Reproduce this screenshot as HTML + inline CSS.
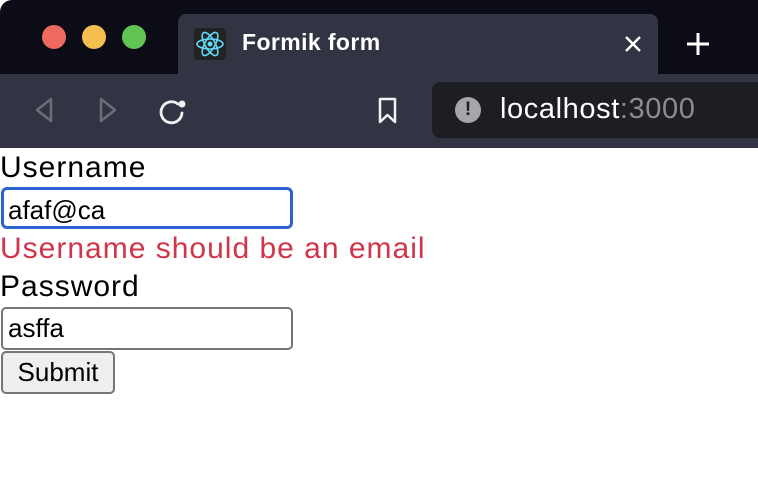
<!DOCTYPE html>
<html><head><style>
*{margin:0;padding:0;box-sizing:border-box}
body{width:758px;height:500px;overflow:hidden;background:#fff;font-family:"Liberation Sans",Arial,sans-serif;position:relative}
.a{position:absolute;white-space:nowrap}
.l{font-size:30px;letter-spacing:1px;line-height:34px}
</style></head><body>
<div class="a" style="left:0;top:0;width:758px;height:74px;background:#0c0c17;border-top-left-radius:12px"></div>
<div class="a" style="left:42px;top:25px;width:24px;height:24px;border-radius:50%;background:#ee6a5e"></div>
<div class="a" style="left:82px;top:25px;width:24px;height:24px;border-radius:50%;background:#f5bf4f"></div>
<div class="a" style="left:122px;top:25px;width:24px;height:24px;border-radius:50%;background:#61c554"></div>
<div class="a" style="left:178px;top:14px;width:480px;height:62px;background:#323443;border-radius:8px 8px 0 0"></div>
<div class="a" style="left:194px;top:28px;width:32px;height:32px;background:#222;border-radius:4px">
<svg width="32" height="32" viewBox="0 0 32 32"><g fill="none" stroke="#61dafb" stroke-width="1.6"><ellipse cx="16" cy="16" rx="13" ry="5"/><ellipse cx="16" cy="16" rx="13" ry="5" transform="rotate(60 16 16)"/><ellipse cx="16" cy="16" rx="13" ry="5" transform="rotate(120 16 16)"/></g><circle cx="16" cy="16" r="2.5" fill="#61dafb"/></svg></div>
<div class="a" style="left:242px;top:29px;color:#fff;font-size:23px;font-weight:bold;letter-spacing:0.4px">Formik form</div>
<svg class="a" style="left:624px;top:35px" width="18" height="18"><path d="M2 2L16 16M16 2L2 16" stroke="#fff" stroke-width="2.4"/></svg>
<svg class="a" style="left:685px;top:31px" width="26" height="26"><path d="M13 2V24M2 13H24" stroke="#fff" stroke-width="3"/></svg>
<div class="a" style="left:0;top:74px;width:758px;height:74px;background:#323443"></div>
<svg class="a" style="left:32px;top:96px" width="24" height="28"><path d="M19 3L5 14L19 25Z" fill="none" stroke="#6b6e7a" stroke-width="2.5" stroke-linejoin="round"/></svg>
<svg class="a" style="left:96px;top:96px" width="24" height="28"><path d="M5 3L19 14L5 25Z" fill="none" stroke="#6b6e7a" stroke-width="2.5" stroke-linejoin="round"/></svg>
<svg class="a" style="left:156px;top:96px" width="32" height="30"><path d="M22 8A10.5 10.5 0 1 0 26 17" fill="none" stroke="#f2f2f2" stroke-width="2.8" stroke-linecap="round"/><circle cx="26" cy="8" r="3.5" fill="#f2f2f2"/></svg>
<svg class="a" style="left:376px;top:96px" width="24" height="30"><path d="M4 3H19V26L11.5 19L4 26Z" fill="none" stroke="#f2f2f2" stroke-width="2.5" stroke-linejoin="round"/></svg>
<div class="a" style="left:432px;top:82px;width:340px;height:56px;background:#1d1e24;border-radius:8px"></div>
<div class="a" style="left:455px;top:97px;width:26px;height:26px;border-radius:50%;background:#a5a6aa;color:#1d1e24;font-weight:bold;font-size:19px;text-align:center;line-height:26px">!</div>
<div class="a" style="left:500px;top:93px;font-size:29px;letter-spacing:0.6px;color:#fff">localhost<span style="color:#8b8c92">:3000</span></div>
<div class="a l" style="left:0;top:151px;color:#000">Username</div>
<div class="a" style="left:1px;top:187px;width:292px;height:42px;border:3px solid #2c62d1;border-radius:6px"></div>
<div class="a" style="left:8px;top:195px;font-size:26px;color:#000">afaf@ca</div>
<div class="a l" style="left:0;top:232px;color:#d0354a">Username should be an email</div>
<div class="a l" style="left:0;top:270px;color:#000">Password</div>
<div class="a" style="left:1px;top:307px;width:292px;height:43px;border:2px solid #767676;border-radius:5px"></div>
<div class="a" style="left:8px;top:313px;font-size:26px;color:#000">asffa</div>
<div class="a" style="left:1px;top:351px;width:114px;height:43px;border:2px solid #767676;border-radius:5px;background:#efefef;font-size:26px;text-align:center;line-height:39px;color:#000">Submit</div>
</body></html>
